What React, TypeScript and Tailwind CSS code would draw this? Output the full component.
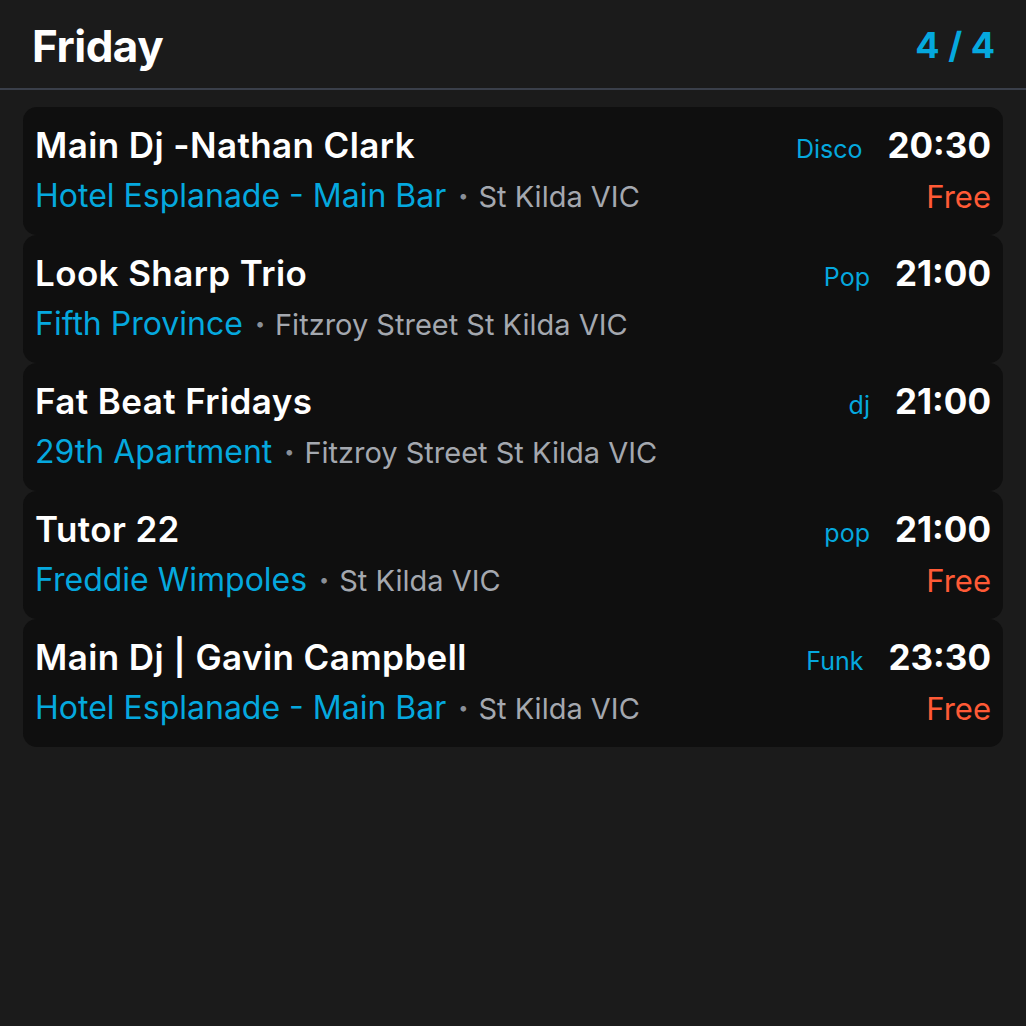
import React from "react";

type Gig = {
  title: string;
  venue: string;
  place: string;
  genre: string;
  time: string;
  free?: boolean;
};

const GIGS: Gig[] = [
  { title: "Main Dj -Nathan Clark", venue: "Hotel Esplanade - Main Bar", place: "St Kilda VIC", genre: "Disco", time: "20:30", free: true },
  { title: "Look Sharp Trio", venue: "Fifth Province", place: "Fitzroy Street St Kilda VIC", genre: "Pop", time: "21:00" },
  { title: "Fat Beat Fridays", venue: "29th Apartment", place: "Fitzroy Street St Kilda VIC", genre: "dj", time: "21:00" },
  { title: "Tutor 22", venue: "Freddie Wimpoles", place: "St Kilda VIC", genre: "pop", time: "21:00", free: true },
  { title: "Main Dj | Gavin Campbell", venue: "Hotel Esplanade - Main Bar", place: "St Kilda VIC", genre: "Funk", time: "23:30", free: true },
];

function GigCard({ gig }: { gig: Gig }) {
  return (
    <div className="rounded-[14px] bg-[#0f0f0f] px-3 pt-[15px] pb-[15px]">
      <div className="flex items-center justify-between h-[46px]">
        <span className="text-[35px] font-semibold text-white tracking-[0.4px]">{gig.title}</span>
        <div className="flex items-baseline gap-[25px]">
          <span className="text-[25px] text-[#05a8de]">{gig.genre}</span>
          <span className="text-[35px] font-bold text-white">{gig.time}</span>
        </div>
      </div>
      <div className="flex items-center justify-between h-[48px] mt-[4px]">
        <div className="flex items-center">
          <span className="text-[32px] text-[#05a8de]">{gig.venue}</span>
          <span className="ml-[12px] mr-[10px] text-[18px] text-[#8a8f98]">•</span>
          <span className="text-[29px] text-[#a4a8af]">{gig.place}</span>
        </div>
        {gig.free && <span className="text-[31px] text-[#ff5a36]">Free</span>}
      </div>
    </div>
  );
}

export default function App() {
  return (
    <div className="min-h-[1026px] w-[1026px] bg-[#1b1b1b] font-['Inter',sans-serif] leading-none">
      <div className="flex items-center justify-between px-8 h-[90px] border-b-2 border-[#3a3f4a]">
        <h1 className="text-[44px] font-bold text-white tracking-[-0.5px] mt-[4px]">Friday</h1>
        <span className="text-[36px] font-bold text-[#05a8de] mr-[-1px] mt-[2px]">4 / 4</span>
      </div>
      <div className="flex flex-col px-[23px] pt-[17px]">
        {GIGS.map((g) => (
          <GigCard key={g.title} gig={g} />
        ))}
      </div>
    </div>
  );
}
